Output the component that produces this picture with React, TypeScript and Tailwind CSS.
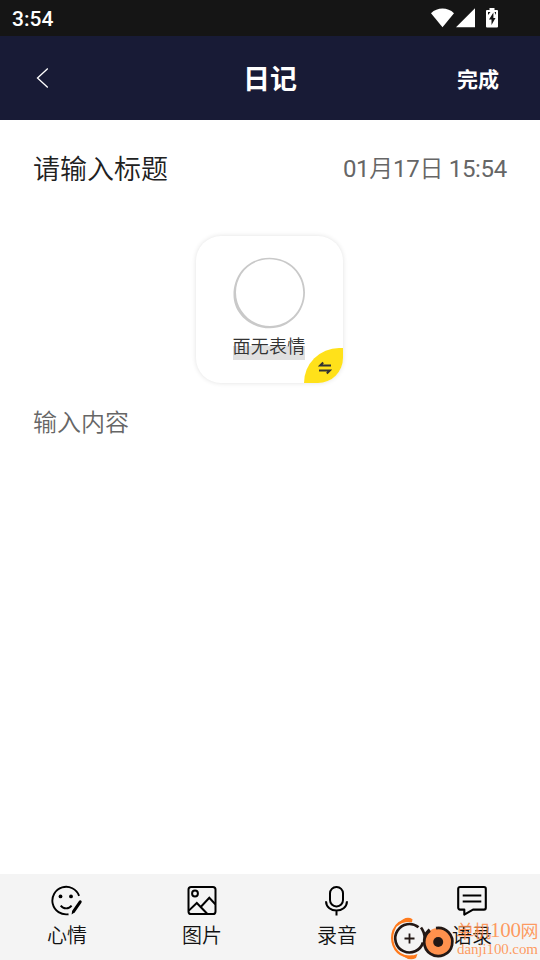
import React from "react";

interface Tool {
  label: string;
  icon: React.ReactNode;
}

const tools: Tool[] = [
  {
    label: "心情",
    icon: (
      <svg width="32" height="32" viewBox="0 0 32 32" fill="none" stroke="#000">
        <path
          d="M28.100 10.800A13.800 13.800 0 1 0 17.500 29.200"
          strokeWidth="1.900"
        />
        <path d="M9.700 20.600c2.600 3.600 8.300 3.600 10.900 0" strokeWidth="1.800" />
        <circle cx="9.500" cy="11.400" r="1.900" fill="#000" stroke="none" />
        <circle cx="20" cy="11.400" r="1.900" fill="#000" stroke="none" />
        <path d="M29.200 16.800L22.800 26.200" strokeWidth="3" strokeLinecap="round" />
        <path d="M21.200 25.400l-.6 4 3.300-2.200z" fill="#000" stroke="none" />
      </svg>
    ),
  },
  {
    label: "图片",
    icon: (
      <svg
        width="32"
        height="32"
        viewBox="0 0 32 32"
        fill="none"
        stroke="#000"
        strokeWidth="2"
      >
        <rect x="2.500" y="2" width="27" height="27" rx="2.600" />
        <circle cx="9" cy="8.500" r="2.900" />
        <path d="M2.800 25.600L10.800 18l10.400 10.800M14.700 22l8.600-9.200 6 6.400" />
      </svg>
    ),
  },
  {
    label: "录音",
    icon: (
      <svg
        width="32"
        height="32"
        viewBox="0 0 32 32"
        fill="none"
        stroke="#000"
        strokeWidth="2"
      >
        <rect x="9" y="2" width="13" height="19.400" rx="6.300" />
        <path d="M5 16.200C5.300 28.600 25.700 28.600 26 16.200M15.500 25.600v5" />
      </svg>
    ),
  },
  {
    label: "语录",
    icon: (
      <svg
        width="32"
        height="32"
        viewBox="0 0 32 32"
        fill="none"
        stroke="#000"
        strokeWidth="2.100"
      >
        <path
          d="M4 2h24a1.800 1.800 0 0 1 1.800 1.800v19a1.800 1.800 0 0 1-1.800 1.800H17L8.300 29.600v-5H4a1.800 1.800 0 0 1-1.800-1.800v-19A1.800 1.800 0 0 1 4 2z"
          strokeLinejoin="round"
        />
        <path d="M6.700 10.500h18.600M6.700 16.500h18.600" />
      </svg>
    ),
  },
];

function StatusBar() {
  return (
    <div className="flex h-9 items-center justify-between bg-[#151515] pl-3 pr-[42px] text-white">
      <p className="font-['Roboto',sans-serif] text-[21px] font-medium leading-9 pt-0.5">
        3:54
      </p>
      <div className="flex items-center">
        <svg width="23" height="20" viewBox="0 0 23 20" fill="#fff">
          <path d="M11.500 19.300L0 5.200C6.400-1 16.600-1 23 5.200z" />
        </svg>
        <svg className="ml-[2px]" width="19" height="20" viewBox="0 0 19 20" fill="#fff">
          <path d="M19 .2V19.200H0z" />
        </svg>
        <svg className="ml-[11px]" width="12" height="20" viewBox="0 0 12 20">
          <path
            d="M3.500 0h5v2H11a1 1 0 0 1 1 1v15.500a1 1 0 0 1-1 1H1a1 1 0 0 1-1-1V3a1 1 0 0 1 1-1h2.500z"
            fill="#fff"
          />
          <path
            d="M7.400 4.500L3 11.600h2.500V17l4-7H7.400zM2 4h2.500L2 7zM10 4v3L8.500 4z"
            fill="#151515"
          />
        </svg>
      </div>
    </div>
  );
}

function MoodCard() {
  return (
    <div className="relative ml-[196px] mt-5 flex h-[147px] w-[147px] flex-col items-center overflow-hidden rounded-[25px] bg-white shadow-[0_0_5px_rgba(0,0,0,0.12)]">
      <svg className="mt-[21px]" width="74" height="72" viewBox="0.5 0 74 72">
        <path
          fillRule="evenodd"
          fill="#c9c9c9"
          d="M37 .8C57 .8 72.500 16 72.500 35.500S57 71.300 37.500 71.300C17 71.300 1 56 1 38 1 16 17 .8 37 .8zM37 2.200C18 2.200 3.500 17 3.500 35.500S19 69 37.500 69 70.700 54 70.700 35.500 56 2.200 37 2.200z"
        />
      </svg>
      <p className="mr-px h-[31px] bg-[linear-gradient(transparent_17px,#e0e0e0_17px,#e0e0e0_31px)] text-[18px] font-[350] leading-[36px] tracking-[0.2px] text-[#333]">
        面无表情
      </p>
      <button className="absolute bottom-0 right-0 flex h-[35px] w-[39px] items-center justify-center rounded-tl-[36px] bg-[#ffe11a] pl-[3px] pt-[4px]">
        <svg
          width="14"
          height="14"
          viewBox="0 0 14 14"
          fill="none"
          stroke="#333"
          strokeWidth="2"
        >
          <path d="M13 4.500H2.200l3-3M1 9.500h10.800l-3 3" />
        </svg>
      </button>
    </div>
  );
}

function Watermark() {
  return (
    <div className="absolute bottom-0 left-[390px] flex h-[44px] w-[150px]">
      <svg width="66" height="44" viewBox="0 0 66 44" fill="none">
        <path
          d="M20 4C12 4 6 8 3.500 14.500 0 24 3.500 36 14 39.800c3 1.200 6 1.400 9 .7"
          stroke="#ff7a1c"
          strokeWidth="2.200"
        />
        <path
          d="M8 7.500Q16-1 22.500 3.300l-.5 2.900Q13 5 7.500 10zM15 39q6 1.500 12.500-1l-1.500 4Q20 45.500 13 40z"
          fill="#ff7a1c"
        />
        <path
          d="M28.500 11.300A14.200 14.200 0 1 0 33 26.500"
          stroke="#231815"
          strokeWidth="2.700"
        />
        <path d="M14.500 22.500h10M19.500 17.500v10" stroke="#231815" strokeWidth="1.800" />
        <path
          d="M31 11.500q3.500 4.500 3.800 11M34.800 19l4.700-5.500"
          stroke="#231815"
          strokeWidth="2.700"
        />
        <circle cx="48.200" cy="26" r="14" fill="#ff914d" />
        <path
          d="M46 12.100A14.100 14.100 0 1 1 40 14.600"
          stroke="#231815"
          strokeWidth="2.700"
        />
        <circle cx="48.200" cy="26" r="5" fill="#231815" />
      </svg>
      <div className="whitespace-nowrap text-[#ff8a45]/85">
        <p className="flex h-[25px] items-center font-['Liberation_Serif',serif] text-[21px] leading-[25px] tracking-[-0.3px] pt-[4px]">
          <span className="font-['Noto_Sans_CJK_SC',sans-serif] text-[18px] tracking-[-1px]">
            单机
          </span>
          100
          <span className="font-['Noto_Sans_CJK_SC',sans-serif] text-[18px] tracking-[-1px]">
            网
          </span>
        </p>
        <p className="mt-px pl-px font-['Liberation_Serif',serif] text-[15px] leading-[15px] tracking-[-0.1px]">
          danji100.com
        </p>
      </div>
    </div>
  );
}

export default function App() {
  return (
    <div className="relative flex h-[960px] w-[540px] flex-col overflow-hidden bg-white font-['Roboto','Noto_Sans_CJK_SC',sans-serif]">
      <StatusBar />
      <header className="grid h-[84px] grid-cols-3 items-center bg-[#181b36] text-white">
        <button className="pl-9">
          <svg
            width="12"
            height="20"
            viewBox="0 0 12 20"
            fill="none"
            stroke="#fff"
            strokeWidth="1.300"
          >
            <path d="M11.800.500L1.500 10l10.300 9.500" />
          </svg>
        </button>
        <h1 className="pt-[3px] text-center text-[27px] font-bold leading-10">日记</h1>
        <button className="pr-[41px] pt-[5px] text-right text-[21px] font-bold">
          完成
        </button>
      </header>

      <main className="flex-1">
        <div className="flex h-24 items-center justify-between px-[33px] pt-[3px]">
          <p className="text-[27px] font-[350] leading-10 text-[#212121]">请输入标题</p>
          <p className="-mt-[2px] text-[24px] leading-10 tracking-[-0.3px] text-[#666]">
            01<span className="font-[350]">月</span>17
            <span className="font-[350]">日</span> 15:54
          </p>
        </div>
        <MoodCard />
        <p className="mt-[19px] px-[33px] text-[24px] font-[350] leading-[42px] text-[#666]">
          输入内容
        </p>
      </main>

      <nav className="grid h-[86px] grid-cols-4 bg-[#f4f4f4]">
        {tools.map((tool) => (
          <button
            key={tool.label}
            className="flex flex-col items-center pr-px pt-[11px]"
          >
            {tool.icon}
            <span className="mt-[5px] text-[20px] font-[350] leading-7 text-[#111]">
              {tool.label}
            </span>
          </button>
        ))}
      </nav>
      <Watermark />
    </div>
  );
}
